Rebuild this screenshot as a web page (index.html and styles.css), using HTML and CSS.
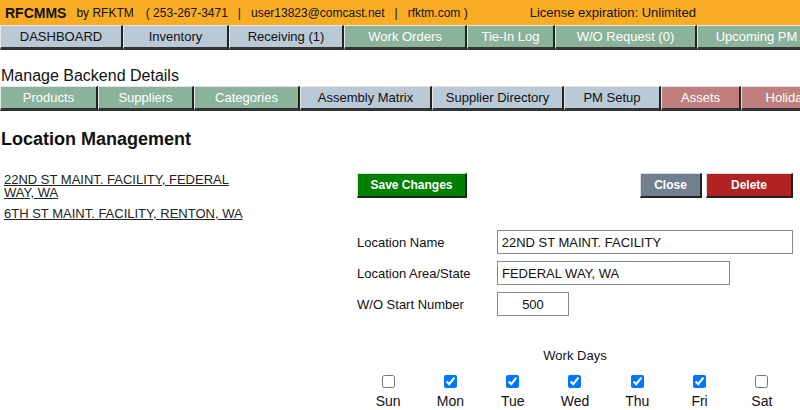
FILE: index.html
```html
<!DOCTYPE html>
<html>
<head>
<meta charset="utf-8">
<link rel="stylesheet" href="styles.css">
</head>
<body>
<div class="topbar">
  <span class="brand">RFCMMS</span>
  <span class="info by">by RFKTM</span>
  <span class="info">( 253-267-3471</span>
  <span class="info sep">|</span>
  <span class="info">user13823@comcast.net</span>
  <span class="info sep">|</span>
  <span class="info">rfktm.com )</span>
  <span class="license">License expiration: Unlimited</span>
</div>
<div class="tabs">
  <div class="tab gray w123">DASHBOARD</div>
  <div class="tab gray w106">Inventory</div>
  <div class="tab gray w115">Receiving (1)</div>
  <div class="tab green w123">Work Orders</div>
  <div class="tab green w88">Tie-In Log</div>
  <div class="tab green w142">W/O Request (0)</div>
  <div class="tab green w120">Upcoming PM</div>
</div>
<div class="section-title">Manage Backend Details</div>
<div class="tabs">
  <div class="tab green w98">Products</div>
  <div class="tab green w96">Suppliers</div>
  <div class="tab green w106">Categories</div>
  <div class="tab gray w132">Assembly Matrix</div>
  <div class="tab gray w132">Supplier Directory</div>
  <div class="tab gray w97">PM Setup</div>
  <div class="tab red w80">Assets</div>
  <div class="tab red w100">Holidays</div>
</div>
<h2 class="page-title">Location Management</h2>
<div class="content">
  <div class="locations">
    <a class="loc" href="#">22ND ST MAINT. FACILITY, FEDERAL WAY, WA</a>
    <a class="loc" href="#">6TH ST MAINT. FACILITY, RENTON, WA</a>
  </div>
  <div class="editor">
    <div class="actions">
      <button class="btn save">Save Changes</button>
      <div class="spacer"></div>
      <button class="btn close">Close</button>
      <button class="btn delete">Delete</button>
    </div>
    <div class="form">
      <div class="row">
        <label class="lbl">Location Name</label>
        <input class="field name" type="text" value="22ND ST MAINT. FACILITY">
      </div>
      <div class="row">
        <label class="lbl">Location Area/State</label>
        <input class="field area" type="text" value="FEDERAL WAY, WA">
      </div>
      <div class="row">
        <label class="lbl">W/O Start Number</label>
        <input class="field num" type="text" value="500">
      </div>
    </div>
    <div class="workdays-title">Work Days</div>
    <div class="days">
      <label class="day"><input type="checkbox"><span>Sun</span></label>
      <label class="day"><input type="checkbox" checked><span>Mon</span></label>
      <label class="day"><input type="checkbox" checked><span>Tue</span></label>
      <label class="day"><input type="checkbox" checked><span>Wed</span></label>
      <label class="day"><input type="checkbox" checked><span>Thu</span></label>
      <label class="day"><input type="checkbox" checked><span>Fri</span></label>
      <label class="day"><input type="checkbox"><span>Sat</span></label>
    </div>
  </div>
</div>
</body>
</html>
```
FILE: styles.css
```css
html, body {
  margin: 0;
  padding: 0;
  background: #fff;
  overflow: hidden;
}
body {
  font-family: "Liberation Sans", Arial, sans-serif;
  color: #111;
  width: 800px;
}
.topbar {
  height: 25px;
  background: #f9ad25;
  display: flex;
  align-items: center;
  white-space: nowrap;
  font-size: 12px;
  padding-left: 5px;
}
.brand {
  font-weight: bold;
  font-size: 14px;
  margin-right: 10px;
}
.info {
  margin-right: 10px;
}
.by {
  margin-right: 12px;
}
.license {
  margin-left: 52px;
  font-size: 13px;
}
.tabs {
  display: flex;
  height: 25px;
  white-space: nowrap;
  overflow: hidden;
}
.tab {
  flex: none;
  box-sizing: border-box;
  height: 25px;
  display: flex;
  align-items: center;
  justify-content: center;
  font-size: 13px;
  border-style: solid;
  border-width: 1px 2px 3px 1px;
  border-color: #e6e6e6 #222 #333 #e6e6e6;
}
.gray { background: #b9c9d6; color: #111; }
.green { background: #8bb39c; color: #fff; }
.red { background: #c07f7f; color: #fff; }
.w80 { width: 80px; }
.w88 { width: 88px; }
.w96 { width: 96px; }
.w97 { width: 97px; }
.w98 { width: 98px; }
.w100 { width: 100px; }
.w106 { width: 106px; }
.w115 { width: 115px; }
.w120 { width: 120px; }
.w123 { width: 123px; }
.w132 { width: 132px; }
.w142 { width: 142px; }
.section-title {
  font-size: 16px;
  margin-top: 16px;
  height: 20px;
  line-height: 20px;
  padding-left: 1px;
}
.page-title {
  font-size: 18px;
  font-weight: bold;
  margin: 17px 0 0 1px;
  height: 22px;
  line-height: 22px;
}
.content {
  display: flex;
  margin-top: 23px;
}
.locations {
  width: 240px;
  padding-left: 4px;
  margin-right: 113px;
  display: flex;
  flex-direction: column;
  gap: 8px;
}
.loc {
  color: #222;
  font-size: 13px;
  line-height: 13px;
  text-decoration: underline;
}
.editor {
  width: 436px;
}
.actions {
  display: flex;
  gap: 4px;
  height: 25px;
}
.spacer { flex: 1; }
.btn {
  font-family: "Liberation Sans", Arial, sans-serif;
  font-size: 12px;
  font-weight: bold;
  color: #fff;
  height: 25px;
  box-sizing: border-box;
  border-style: solid;
  border-width: 1px 2px 2px 1px;
  border-color: #ddd #222 #222 #ddd;
  padding: 0;
}
.save { width: 110px; background: #008000; }
.close { width: 62px; background: #708090; }
.delete { width: 87px; background: #b22222; }
.form {
  margin-top: 32px;
  display: flex;
  flex-direction: column;
  gap: 7px;
}
.row {
  display: flex;
  align-items: center;
}
.lbl {
  width: 140px;
  font-size: 13px;
}
.field {
  box-sizing: border-box;
  font-family: "Liberation Sans", Arial, sans-serif;
  font-size: 13px;
  color: #111;
  border: 1px solid #8a8a8a;
  padding: 0 4px;
  height: 24px;
}
.name { width: 297px; }
.area { width: 233px; }
.num { width: 72px; text-align: center; }
.workdays-title {
  text-align: center;
  font-size: 13px;
  margin-top: 32px;
}
.days {
  display: grid;
  grid-template-columns: repeat(7, 1fr);
  margin-top: 12px;
}
.day {
  display: flex;
  flex-direction: column;
  align-items: center;
  font-size: 14px;
}
.day input {
  margin: 0;
  width: 13px;
  height: 13px;
}
.day span {
  margin-top: 5px;
}
```
